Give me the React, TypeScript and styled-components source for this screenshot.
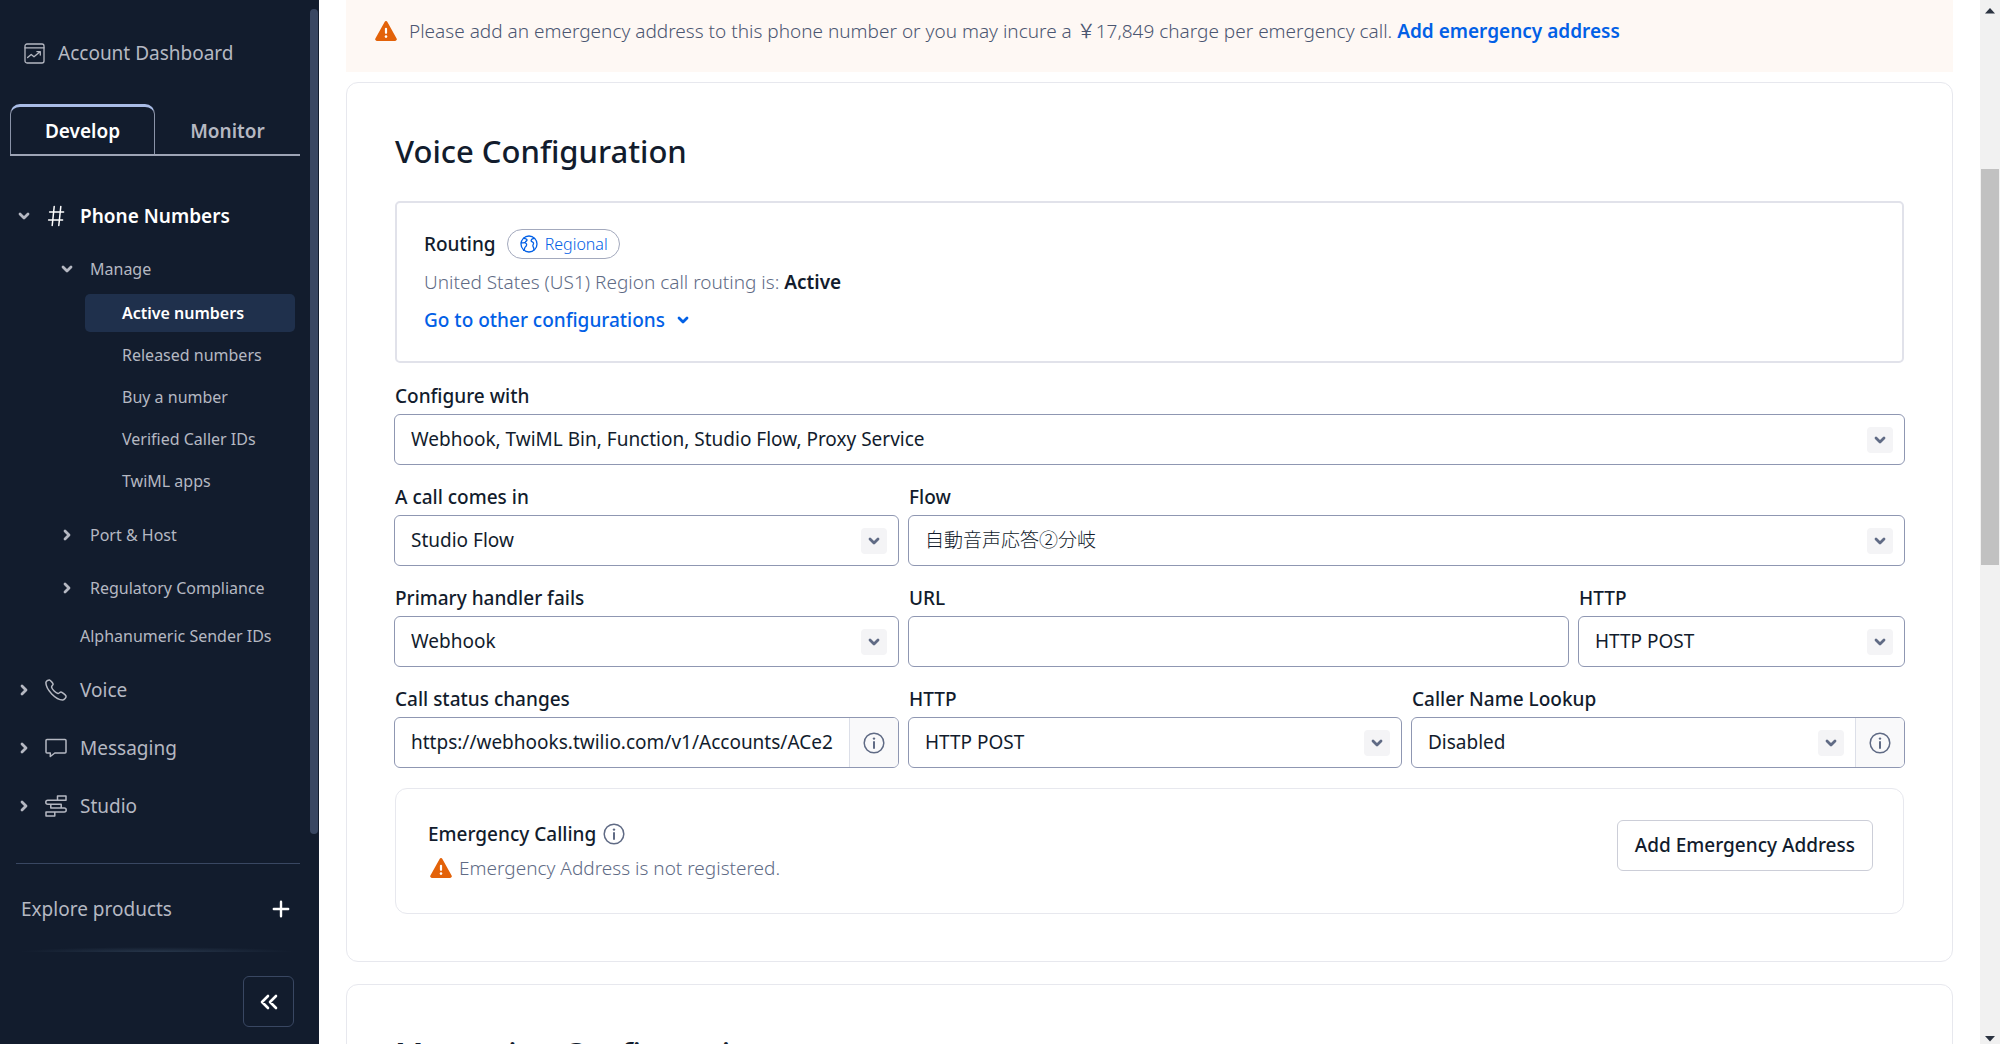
import React from "react";
import styled, { createGlobalStyle, css } from "styled-components";

const color = {
  navy: "#121c2d",
  navyActive: "#1f304c",
  navyLine: "#394762",
  navyText: "#b5b8c2",
  ink: "#121c2d",
  weak: "#606b85",
  link: "#0260e6",
  field: "#8f97b2",
  soft: "#e7e8ee",
  frame: "#e1e2ea",
  warn: "#e36209",
};

const GlobalStyle = createGlobalStyle`
  *, *::before, *::after { box-sizing: border-box; }
  body {
    margin: 0;
    background: #fff;
    color: ${color.ink};
    font-family: "Noto Sans", "Noto Sans CJK JP", sans-serif;
    font-size: 19px;
    line-height: 28px;
  }
  button, input, select { font: inherit; color: inherit; }
  h2, p, ul { margin: 0; padding: 0; }
  ul { list-style: none; }
  a { text-decoration: none; color: inherit; }
  svg { display: block; flex: none; }
`;

const Page = styled.div`
  display: flex;
  height: 100vh;
  overflow: hidden;
`;

/* ---------- Sidebar ---------- */

const Sidebar = styled.aside`
  flex: none;
  width: 319px;
  display: flex;
  background: ${color.navy};
  color: ${color.navyText};
`;

const SidebarBody = styled.div`
  flex: 1;
  min-width: 0;
  display: flex;
  flex-direction: column;
  padding: 35px 10px 0;
`;

const SidebarRail = styled.div`
  width: 9px;
  padding: 9px 1px 0 0;
`;

const SidebarThumb = styled.div`
  height: 79vh;
  border-radius: 4px;
  background: ${color.navyLine};
`;

const DashboardLink = styled.a`
  display: flex;
  align-items: center;
  gap: 13px;
  height: 36px;
  padding-left: 14px;
`;

const Tabs = styled.div`
  display: flex;
  margin-top: 33px;
  border-bottom: 2px solid #9da4b5;
`;

const Tab = styled.button<{ $active?: boolean }>`
  height: 50px;
  padding: 0;
  flex: 1;
  background: none;
  border: 1px solid transparent;
  border-top-width: 3px;
  border-bottom: 0;
  font-weight: 600;
  ${(p) =>
    p.$active &&
    css`
      color: #fff;
      border-color: #a9bce6 #8a93a8;
      border-radius: 10px 10px 0 0;
    `}
`;

const Nav = styled.nav`
  margin-top: 40px;
`;

const NavGroup = styled.div`
  display: flex;
  flex-direction: column;
  gap: 20px;
`;

const NavTop = styled.a<{ $open?: boolean }>`
  display: grid;
  grid-template-columns: 27px 35px auto;
  align-items: center;
  height: 38px;
  padding-left: 8px;
  ${(p) =>
    p.$open &&
    css`
      color: #fff;
      font-weight: 600;
      height: 40px;
      svg:first-child {
        color: ${color.navyText};
      }
    `}
`;

const SubList = styled.div`
  display: flex;
  flex-direction: column;
  padding: 18px 0 20px;
`;

const SubToggle = styled.a`
  display: flex;
  align-items: center;
  gap: 17px;
  height: 30px;
  padding-left: 51px;
  font-size: 16px;
`;

const SubToggles = styled.div`
  display: flex;
  flex-direction: column;
  gap: 23px;
  padding: 20px 0 18px;
`;

const SubLink = styled.a`
  display: flex;
  align-items: center;
  height: 30px;
  padding-left: 70px;
  font-size: 16px;
`;

const LeafList = styled.ul`
  display: flex;
  flex-direction: column;
  gap: 4px;
  margin: 10px 5px 0 75px;
`;

const Leaf = styled.a<{ $active?: boolean }>`
  display: flex;
  align-items: center;
  height: 38px;
  padding-left: 37px;
  border-radius: 5px;
  font-size: 16px;
  ${(p) =>
    p.$active &&
    css`
      background: ${color.navyActive};
      color: #fff;
      font-weight: 600;
    `}
`;

const Explore = styled.button`
  display: flex;
  align-items: center;
  justify-content: space-between;
  margin: 38px 0 0 6px;
  padding: 24px 10px 18px 5px;
  height: 84px;
  border: 0;
  border-top: 1px solid ${color.navyLine};
  background: none;
  svg {
    color: #fff;
  }
`;

const Glow = styled.div`
  height: 5px;
  margin: 0 4px 0 8px;
  background: radial-gradient(ellipse at 50% 100%, #27364a 0%, ${color.navy} 70%);
`;

const CollapseButton = styled.button`
  align-self: flex-end;
  display: grid;
  place-items: center;
  width: 51px;
  height: 51px;
  margin: 24px 6px 0 0;
  padding: 0;
  border: 1px solid ${color.navyLine};
  border-radius: 6px;
  background: none;
  color: #fff;
`;

/* ---------- Main ---------- */

const Main = styled.main`
  flex: 1;
  min-width: 0;
  padding: 0 27px;
`;

const Alert = styled.div`
  display: flex;
  align-items: center;
  gap: 12px;
  padding: 16px 29px 26px;
  line-height: 30px;
  font-weight: 350;
  color: #4b5671;
  background: #fef8f4;
`;

const Link = styled.a`
  color: ${color.link};
  font-weight: 600;
`;

const Card = styled.section`
  margin-top: 10px;
  padding: 48px 47px 47px;
  border: 1px solid ${color.soft};
  border-radius: 12px;
  & + & {
    margin-top: 22px;
  }
`;

const Heading = styled.h2`
  padding-left: 1px;
  font-size: 31px;
  line-height: 40px;
  font-weight: 500;
`;

const Routing = styled.div`
  display: flex;
  flex-direction: column;
  gap: 8px;
  margin: 30px 1px 21px;
  padding: 26px 27px;
  border: 2px solid ${color.frame};
  border-radius: 5px;
`;

const RoutingLine = styled.div<{ $gap: number }>`
  display: flex;
  align-items: center;
  gap: ${(p) => p.$gap}px;
  height: 30px;
  font-weight: 500;
`;

const WeakText = styled.p`
  line-height: 30px;
  font-weight: 350;
  color: ${color.weak};
  strong {
    font-weight: 600;
    color: ${color.ink};
  }
`;

const Badge = styled.span`
  display: flex;
  align-items: center;
  gap: 7px;
  height: 30px;
  padding: 0 11px 0 12px;
  border: 1px solid #a3a9bd;
  border-radius: 15px;
  font-size: 16px;
  font-weight: 350;
  color: ${color.link};
`;

const LinkToggle = styled.button`
  display: flex;
  align-items: center;
  gap: 12px;
  padding: 0;
  border: 0;
  background: none;
  font-weight: 500;
  color: ${color.link};
`;

const Form = styled.form`
  display: flex;
  flex-direction: column;
  gap: 20px;
`;

const FormRow = styled.div<{ $columns: string }>`
  display: grid;
  grid-template-columns: ${(p) => p.$columns};
  gap: 9px;
`;

const Field = styled.div`
  display: flex;
  flex-direction: column;
  gap: 6px;
  min-width: 0;
`;

const Label = styled.label`
  padding-left: 1px;
  line-height: 24px;
  font-weight: 500;
`;

const Box = styled.div`
  display: flex;
  height: 51px;
  border: 1px solid ${color.field};
  border-radius: 6px;
  overflow: hidden;
  background: #fff;
`;

const SelectArea = styled.div`
  flex: 1;
  min-width: 0;
  display: grid;
  align-items: center;
  > * {
    grid-area: 1 / 1;
  }
`;

const Select = styled.select<{ $thin?: boolean }>`
  appearance: none;
  width: 100%;
  height: 49px;
  padding: 0 50px 2px 16px;
  border: 0;
  background: none;
  font-weight: ${(p) => (p.$thin ? 300 : 400)};
`;

const ChevronBox = styled.span`
  justify-self: end;
  display: grid;
  place-items: center;
  width: 26px;
  height: 26px;
  margin-right: 11px;
  border-radius: 4px;
  background: #f4f4f6;
  color: ${color.weak};
  pointer-events: none;
`;

const TextInput = styled.input`
  flex: 1;
  min-width: 0;
  margin: 0 16px;
  padding: 0 0 2px;
  border: 0;
  background: none;
`;

const InfoButton = styled.button`
  flex: none;
  display: grid;
  place-items: center;
  width: 49px;
  padding: 0;
  border: 0;
  border-left: 1px solid #dcdfe8;
  background: #f9f9fa;
  color: ${color.weak};
`;

const IconButton = styled.button`
  display: grid;
  padding: 0;
  border: 0;
  background: none;
  color: ${color.weak};
`;

const Emergency = styled.div`
  display: flex;
  justify-content: space-between;
  align-items: flex-start;
  margin: 20px 1px 0;
  padding: 31px 30px 31px 32px;
  border: 1px solid ${color.soft};
  border-radius: 12px;
`;

const EmergencyText = styled.div`
  display: flex;
  flex-direction: column;
  gap: 6px;
`;

const EmergencyTitle = styled.div`
  display: flex;
  align-items: center;
  gap: 7px;
  font-weight: 500;
`;

const EmergencyNote = styled.div`
  display: flex;
  align-items: center;
  gap: 7px;
  padding-left: 2px;
  font-weight: 350;
  color: ${color.weak};
`;

const OutlineButton = styled.button`
  height: 51px;
  padding: 0 17px 2px;
  border: 1px solid #ccced8;
  border-radius: 6px;
  background: #fff;
  font-weight: 500;
`;

/* ---------- Window scroll bar ---------- */

const ScrollBar = styled.div`
  flex: none;
  width: 20px;
  display: flex;
  flex-direction: column;
  align-items: center;
  padding: 8px 1px 2px;
  background: #f1f1f1;
  color: #2b3341;
`;

const ScrollTrack = styled.div`
  flex: 1;
  align-self: stretch;
  display: grid;
  grid-template-rows: 155fr 395fr 471fr;
`;

const ScrollThumb = styled.div`
  grid-row: 2;
  background: #c1c1c1;
`;

/* ---------- Icons ---------- */

type ChevronProps = { dir?: "down" | "right"; size?: number };

const Chevron = ({ dir = "down", size = 12 }: ChevronProps) => (
  <svg width={size} height={size} viewBox="0 0 12 12" fill="none" stroke="currentColor" strokeWidth="2.8" strokeLinecap="round" strokeLinejoin="round">
    <path d={dir === "down" ? "M2 4l4 4 4-4" : "M4 2l4 4-4 4"} />
  </svg>
);

const DashboardIcon = () => (
  <svg width="21" height="21" viewBox="0 0 21 21" fill="none" stroke="currentColor" strokeWidth="1.3" strokeLinecap="round" strokeLinejoin="round">
    <rect x="1" y="1" width="19" height="19" rx="2" />
    <path d="M1 4.8h19M3.6 14.6l3.6-3.2 2.8 2.4 6-5M12.9 8.6h3.4V12" />
  </svg>
);

const HashIcon = () => (
  <svg width="22" height="22" viewBox="0 0 22 22" fill="none" stroke="currentColor" strokeWidth="1.5" strokeLinecap="round">
    <path d="M9.2 1.5l-2 19M15.8 1.5l-2 19M4.600 7h14M3.600 15h14" />
  </svg>
);

const PhoneIcon = () => (
  <svg width="22" height="22" viewBox="0 0 22 22" fill="none" stroke="currentColor" strokeWidth="1.5" strokeLinejoin="round">
    <path d="M.9 3.6C1 2.3 3.200.7 4.500.9c1 .2 3.400 3.300 3.600 4.300.1 1-1.700 1.900-1.500 2.900.5 2.500 4.100 5.900 6.400 6.300 1 .2 1.900-1.500 3-1.400 1 .1 4.600 3 5 4.100.3 1.300-1.700 3.700-3.200 3.800C11 21.100.7 10.500.9 3.600z" />
  </svg>
);

const MessageIcon = () => (
  <svg width="22" height="20" viewBox="0 0 22 20" fill="none" stroke="currentColor" strokeWidth="1.5" strokeLinejoin="round">
    <path d="M2 1.500h18a1 1 0 0 1 1 1V14a1 1 0 0 1-1 1H9.800l-4.500 3.500V15H2a1 1 0 0 1-1-1V2.500a1 1 0 0 1 1-1z" />
  </svg>
);

const StudioIcon = () => (
  <svg width="22" height="22" viewBox="0 0 22 22" fill="none" stroke="currentColor" strokeWidth="1.5" strokeLinejoin="round">
    <path d="M12.500 1H21v4.300h-8.500zM12.500 5.300H2.800a2 2 0 0 0 0 4h13.400v3.700H5.800V9.300M16.200 13h3a2 2 0 0 1 0 4H9.800M5.800 13h4M1 17h8.800v4H1z" />
  </svg>
);

const PlusIcon = () => (
  <svg width="18" height="18" viewBox="0 0 18 18" fill="none" stroke="currentColor" strokeWidth="2.400" strokeLinecap="round">
    <path d="M9 1.800v14.400M1.800 9h14.400" />
  </svg>
);

const CollapseIcon = () => (
  <svg width="18" height="16" viewBox="0 0 18 16" fill="none" stroke="currentColor" strokeWidth="2.600" strokeLinecap="round" strokeLinejoin="round">
    <path d="M8 2L2 8l6 6M16 2l-6 6 6 6" />
  </svg>
);

const WarningIcon = () => (
  <svg width="22" height="20" viewBox="0 0 22 20">
    <path d="M9.600.9a1.600 1.600 0 0 1 2.800 0l9.200 16.600a1.600 1.600 0 0 1-1.400 2.400H1.800a1.600 1.600 0 0 1-1.400-2.400z" fill={color.warn} />
    <path d="M11 7.800v4" stroke="#fff" strokeWidth="2.200" strokeLinecap="round" />
    <circle cx="11" cy="15.600" r="1.300" fill="#fff" />
  </svg>
);

const InfoIcon = () => (
  <svg width="22" height="22" viewBox="0 0 22 22" fill="none" stroke="currentColor" strokeWidth="1.500">
    <circle cx="11" cy="11" r="9.800" />
    <path d="M11 10v6" strokeWidth="2" strokeLinecap="round" />
    <circle cx="11" cy="6.600" r="1.200" fill="currentColor" stroke="none" />
  </svg>
);

const GlobeIcon = () => (
  <svg width="18" height="18" viewBox="0 0 18 18" fill="none" stroke="currentColor" strokeWidth="1.300" strokeLinejoin="round" strokeLinecap="round">
    <circle cx="9" cy="9" r="8" />
    <path d="M3.600 3.200c1 .7 2.500.3 3.300 1.300.8 1.300-1 1.500-1.500 2.500M1.200 7.800c1.300.4 2.600-.4 3.900 0 1.700.5 1.900 2 1 3.300-.7 1-1.400 1-1.500 2.300 0 .8-.4 1.400-.9 2M14.600 3.300c-1.500.1-3.300.6-3.500 2.200-.1 1.500 2 1.200 2.400 2.500.3 1.200-.9 1.700-.6 3 .2 1.300 1.400 1.700.9 4" />
  </svg>
);

const Arrow = ({ up }: { up?: boolean }) => (
  <svg width="10" height="6" viewBox="0 0 10 6">
    <path d={up ? "M0 5.500L5 0l5 5.500z" : "M0 0h10L5 5.500z"} fill="currentColor" />
  </svg>
);

/* ---------- Composed fields ---------- */

type FieldProps = {
  id: string;
  label: string;
  value?: string;
  kind?: "select" | "text";
  thin?: boolean;
  info?: boolean;
};

const FormField = ({ id, label, value = "", kind = "select", thin, info }: FieldProps) => (
  <Field>
    <Label htmlFor={id}>{label}</Label>
    <Box>
      {kind === "select" ? (
        <SelectArea>
          <Select id={id} defaultValue={value} $thin={thin}>
            <option>{value}</option>
          </Select>
          <ChevronBox>
            <Chevron />
          </ChevronBox>
        </SelectArea>
      ) : (
        <TextInput id={id} type="text" defaultValue={value} />
      )}
      {info && (
        <InfoButton type="button" aria-label={`About ${label}`}>
          <InfoIcon />
        </InfoButton>
      )}
    </Box>
  </Field>
);

const leaves = ["Active numbers", "Released numbers", "Buy a number", "Verified Caller IDs", "TwiML apps"];

export default function App() {
  return (
    <Page>
      <GlobalStyle />
      <Sidebar>
        <SidebarBody>
          <DashboardLink href="#dashboard">
            <DashboardIcon />
            Account Dashboard
          </DashboardLink>
          <Tabs role="tablist">
            <Tab role="tab" aria-selected="true" $active>
              Develop
            </Tab>
            <Tab role="tab" aria-selected="false">
              Monitor
            </Tab>
          </Tabs>
          <Nav>
            <NavTop href="#phone-numbers" $open>
              <Chevron />
              <HashIcon />
              Phone Numbers
            </NavTop>
            <SubList>
              <SubToggle href="#manage">
                <Chevron />
                Manage
              </SubToggle>
              <LeafList>
                {leaves.map((name, i) => (
                  <li key={name}>
                    <Leaf href={`#${i}`} $active={i === 0}>
                      {name}
                    </Leaf>
                  </li>
                ))}
              </LeafList>
              <SubToggles>
                <SubToggle href="#port-host">
                  <Chevron dir="right" />
                  Port &amp; Host
                </SubToggle>
                <SubToggle href="#regulatory">
                  <Chevron dir="right" />
                  Regulatory Compliance
                </SubToggle>
              </SubToggles>
              <SubLink href="#sender-ids">Alphanumeric Sender IDs</SubLink>
            </SubList>
            <NavGroup>
              <NavTop href="#voice">
                <Chevron dir="right" />
                <PhoneIcon />
                Voice
              </NavTop>
              <NavTop href="#messaging">
                <Chevron dir="right" />
                <MessageIcon />
                Messaging
              </NavTop>
              <NavTop href="#studio">
                <Chevron dir="right" />
                <StudioIcon />
                Studio
              </NavTop>
            </NavGroup>
          </Nav>
          <Explore>
            Explore products
            <PlusIcon />
          </Explore>
          <Glow />
          <CollapseButton aria-label="Collapse navigation">
            <CollapseIcon />
          </CollapseButton>
        </SidebarBody>
        <SidebarRail>
          <SidebarThumb />
        </SidebarRail>
      </Sidebar>

      <Main>
        <Alert role="alert">
          <WarningIcon />
          <p>
            Please add an emergency address to this phone number or you may incure a ￥17,849 charge per emergency call.{" "}
            <Link href="#add-address">Add emergency address</Link>
          </p>
        </Alert>

        <Card>
          <Heading>Voice Configuration</Heading>
          <Routing>
            <RoutingLine $gap={11}>
              Routing
              <Badge>
                <GlobeIcon />
                Regional
              </Badge>
            </RoutingLine>
            <WeakText>
              United States (US1) Region call routing is: <strong>Active</strong>
            </WeakText>
            <RoutingLine $gap={0}>
              <LinkToggle type="button">
                Go to other configurations
                <Chevron />
              </LinkToggle>
            </RoutingLine>
          </Routing>
          <Form>
            <FormRow $columns="minmax(0, 1fr)">
              <FormField id="configure-with" label="Configure with" value="Webhook, TwiML Bin, Function, Studio Flow, Proxy Service" />
            </FormRow>
            <FormRow $columns="505fr 997fr">
              <FormField id="call-comes-in" label="A call comes in" value="Studio Flow" />
              <FormField id="flow" label="Flow" value="自動音声応答②分岐" thin />
            </FormRow>
            <FormRow $columns="505fr 661fr 327fr">
              <FormField id="handler-fails" label="Primary handler fails" value="Webhook" />
              <FormField id="handler-url" label="URL" kind="text" />
              <FormField id="handler-http" label="HTTP" value="HTTP POST" />
            </FormRow>
            <FormRow $columns="505fr 494fr 494fr">
              <FormField
                id="status-changes"
                label="Call status changes"
                kind="text"
                value="https://webhooks.twilio.com/v1/Accounts/ACe2"
                info
              />
              <FormField id="status-http" label="HTTP" value="HTTP POST" />
              <FormField id="caller-name" label="Caller Name Lookup" value="Disabled" info />
            </FormRow>
          </Form>
          <Emergency>
            <EmergencyText>
              <EmergencyTitle>
                Emergency Calling
                <IconButton type="button" aria-label="About Emergency Calling">
                  <InfoIcon />
                </IconButton>
              </EmergencyTitle>
              <EmergencyNote>
                <WarningIcon />
                Emergency Address is not registered.
              </EmergencyNote>
            </EmergencyText>
            <OutlineButton type="button">Add Emergency Address</OutlineButton>
          </Emergency>
        </Card>

        <Card>
          <Heading>Messaging Configuration</Heading>
        </Card>
      </Main>

      <ScrollBar aria-hidden="true">
        <Arrow up />
        <ScrollTrack>
          <ScrollThumb />
        </ScrollTrack>
        <Arrow />
      </ScrollBar>
    </Page>
  );
}
